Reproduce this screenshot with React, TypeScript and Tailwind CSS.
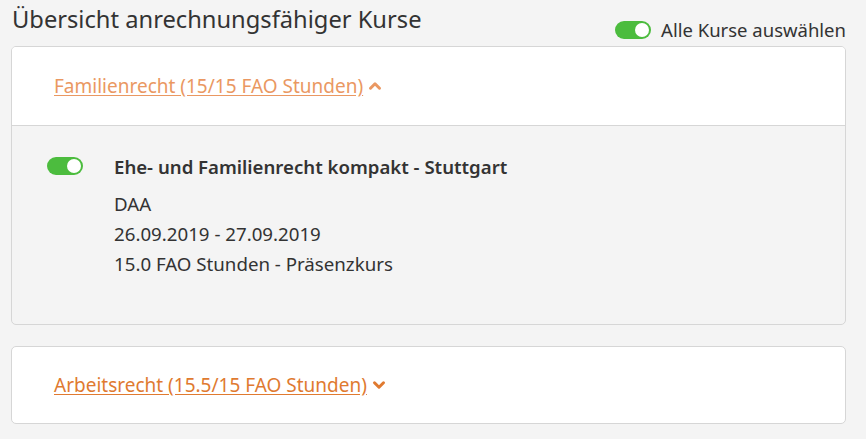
import { ChevronUp, ChevronDown } from 'lucide-react'

function Toggle() {
  return (
    <span className="inline-flex h-[18px] w-[36px] shrink-0 items-center justify-end rounded-full bg-[#4cbc3e] px-[2px]">
      <span className="h-[14px] w-[14px] rounded-full bg-white" />
    </span>
  )
}

export default function App() {
  return (
    <div
      className="h-[439px] w-[866px] overflow-hidden bg-[#f4f4f4] pl-[11px] text-[#333]"
      style={{ fontFamily: '"Noto Sans", "Open Sans", sans-serif' }}
    >
      <div className="flex h-[46px] w-[835px] items-start justify-between">
        <h1 className="mt-[3px] ml-[1px] text-[23.7px] leading-[32px] text-[#333]">
          Übersicht anrechnungsfähiger Kurse
        </h1>
        <label className="mt-[16px] flex items-center gap-[10px] text-[18.5px] leading-[28px]">
          <Toggle />
          <span>Alle Kurse auswählen</span>
        </label>
      </div>

      <div className="h-[279px] w-[835px] overflow-hidden rounded-[5px] border border-[#d6d6d6]">
        <div className="flex h-[79px] items-center border-b border-[#d6d6d6] bg-white pl-[42px]">
          <a className="flex items-center gap-[3px] text-[19px] text-[#ea9862] underline underline-offset-2">
            Familienrecht (15/15 FAO Stunden)
            <ChevronUp size={18} strokeWidth={4} />
          </a>
        </div>
        <div className="flex gap-[31px] pt-[31px] pl-[35px]">
          <Toggle />
          <div className="-mt-[4px] text-[18.7px] leading-[30px]">
            <div className="mb-[8px] text-[18.6px] font-semibold leading-[28px]">
              Ehe- und Familienrecht kompakt - Stuttgart
            </div>
            <div>DAA</div>
            <div>26.09.2019 - 27.09.2019</div>
            <div>15.0 FAO Stunden - Präsenzkurs</div>
          </div>
        </div>
      </div>

      <div className="mt-[21px] flex h-[78px] w-[835px] items-center rounded-[5px] border border-[#d6d6d6] bg-white pl-[42px]">
        <a className="flex items-center gap-[3px] text-[19px] text-[#e07a30] underline underline-offset-2">
          Arbeitsrecht (15.5/15 FAO Stunden)
          <ChevronDown size={18} strokeWidth={4} />
        </a>
      </div>
    </div>
  )
}
